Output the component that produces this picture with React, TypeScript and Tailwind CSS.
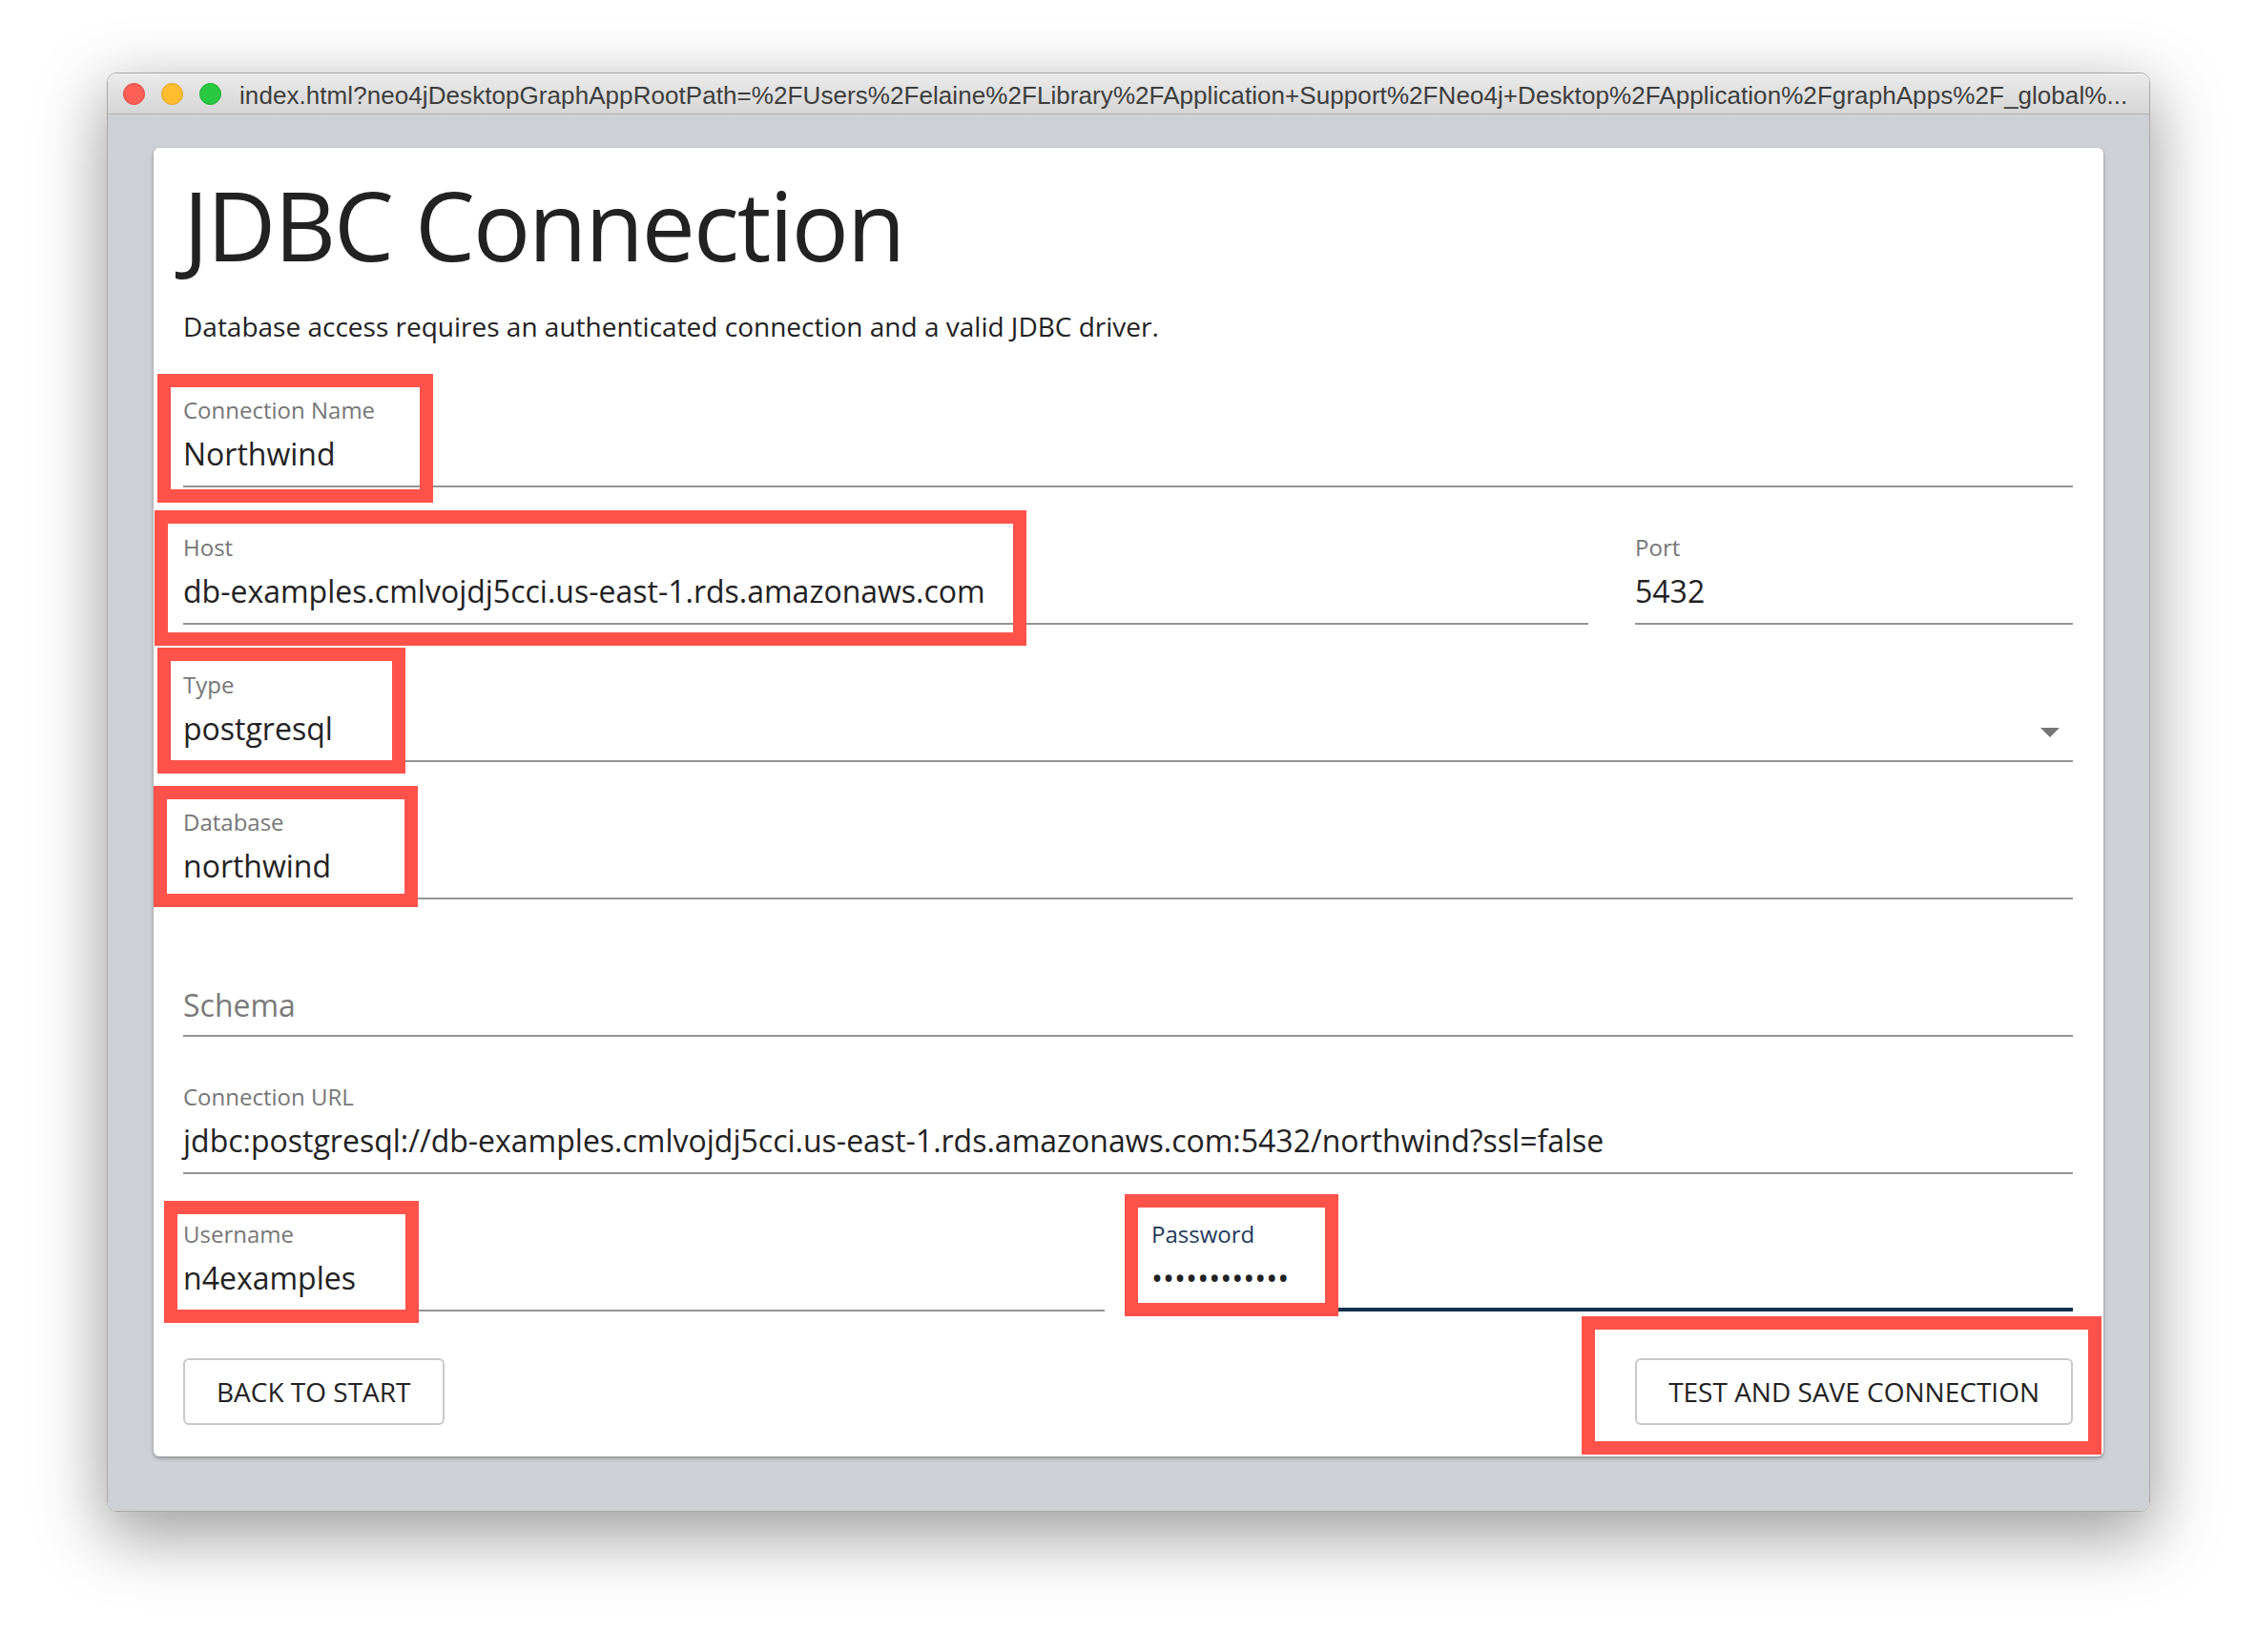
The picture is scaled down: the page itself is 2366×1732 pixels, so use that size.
import React from "react";

const annotations = [
	{ key: "name", left: 165, top: 392, width: 289, height: 135 },
	{ key: "host", left: 162, top: 535, width: 914, height: 142 },
	{ key: "type", left: 165, top: 679, width: 260, height: 132 },
	{ key: "db", left: 161, top: 824, width: 277, height: 127 },
	{ key: "user", left: 172, top: 1259, width: 267, height: 128 },
	{ key: "pass", left: 1179, top: 1252, width: 224, height: 128 },
	{ key: "save", left: 1658, top: 1380, width: 545, height: 145 },
];

const TextField = ({
	label,
	value,
	placeholder,
	focused,
	select,
}: {
	label?: string;
	value?: string;
	placeholder?: string;
	focused?: boolean;
	select?: boolean;
}) => {
	return (
		<div
			className={
				focused
					? "pt-[51px] pb-[11px] border-b-4 border-[#14314f]"
					: "pt-[51px] pb-[13px] border-b-2 border-[#949494]"
			}
		>
			<div
				className={`h-[24px] text-[24px] leading-[24px] whitespace-nowrap ${
					focused ? "text-[#1d3a5a]" : "text-[#767676]"
				}`}
			>
				{label}
			</div>
			<div className="mt-[14px] h-[40px] flex items-center">
				{placeholder ? (
					<span className="mt-[4px] text-[32px] leading-[40px] text-[#7a7a7a] whitespace-nowrap">
						{placeholder}
					</span>
				) : (
					<span className="text-[32px] leading-[40px] text-[#222222] whitespace-nowrap">
						{value}
					</span>
				)}
				{select ? (
					<svg
						width="20"
						height="10"
						viewBox="0 0 20 10"
						className="ml-auto mr-[14px] mt-[8px]"
					>
						<path d="M0 0 L20 0 L10 10 Z" fill="#757575" />
					</svg>
				) : null}
			</div>
		</div>
	);
};

const OutlineButton = ({ title }: { title: string }) => (
	<button className="h-[70px] px-[33px] rounded-[6px] border-2 border-[#c9c9c9] bg-white text-[28px] leading-[40px] text-[#222222] whitespace-nowrap">
		{title}
	</button>
);

export default function App() {
	return (
		<div className="relative w-[2366px] h-[1732px] bg-white pt-[76px] pl-[112px] overflow-hidden font-['Open_Sans',sans-serif]">
			<div className="w-[2142px] rounded-[10px] border border-[#a9a9a9] shadow-[0_22px_70px_4px_rgba(0,0,0,0.38)] overflow-hidden">
				{/* title bar */}
				<div className="h-[43px] flex items-center pl-[16px] bg-gradient-to-b from-[#ebebeb] to-[#d5d5d5] border-b border-[#b1b1b1]">
					<div className="flex gap-[17px]">
						<span className="w-[23px] h-[23px] rounded-full bg-[#fe5f57] border border-[#e0443e]" />
						<span className="w-[23px] h-[23px] rounded-full bg-[#febc2e] border border-[#dea123]" />
						<span className="w-[23px] h-[23px] rounded-full bg-[#28c840] border border-[#1aab29]" />
					</div>
					<span className="ml-[19px] mt-[3px] text-[26px] tracking-[0.07px] leading-[30px] text-[#3d3d3d] whitespace-nowrap font-['Liberation_Sans',Arial,sans-serif]">
						index.html?neo4jDesktopGraphAppRootPath=%2FUsers%2Felaine%2FLibrary%2FApplication+Support%2FNeo4j+Desktop%2FApplication%2FgraphApps%2F_global%...
					</span>
				</div>

				{/* window body */}
				<div className="bg-[#cdd0d5] px-[48px] pt-[35px] pb-[57px]">
					<div className="bg-white rounded-[6px] pt-[30px] pl-[31px] pr-[32px] pb-[33px] shadow-[0_2px_4px_rgba(0,0,0,0.25),0_1px_2px_rgba(0,0,0,0.15)]">
						<h1 className="text-[100px] leading-[100px] tracking-[-2px] text-[#222222] whitespace-nowrap">
							JDBC Connection
						</h1>
						<p className="mt-[39px] text-[28px] leading-[36px] text-[#222222] whitespace-nowrap">
							Database access requires an authenticated connection and a valid JDBC driver.
						</p>

						<div className="mt-[7px] flex flex-col">
							<TextField label="Connection Name" value="Northwind" />
							<div className="grid grid-cols-[1fr_459px] gap-x-[49px]">
								<TextField label="Host" value="db-examples.cmlvojdj5cci.us-east-1.rds.amazonaws.com" />
								<TextField label="Port" value="5432" />
							</div>
							<TextField label="Type" value="postgresql" select />
							<TextField label="Database" value="northwind" />
							<TextField placeholder="Schema" />
							<TextField
								label="Connection URL"
								value="jdbc:postgresql://db-examples.cmlvojdj5cci.us-east-1.rds.amazonaws.com:5432/northwind?ssl=false"
							/>
							<div className="grid grid-cols-2 gap-x-[49px]">
								<TextField label="Username" value="n4examples" />
								<TextField label="Password" value="••••••••••••" focused />
							</div>
						</div>

						<div className="mt-[49px] flex justify-between">
							<OutlineButton title="BACK TO START" />
							<OutlineButton title="TEST AND SAVE CONNECTION" />
						</div>
					</div>
				</div>
			</div>

			{/* red annotation boxes */}
			{annotations.map((box) => (
				<div
					key={box.key}
					className="absolute border-[14px] border-[#ff524a] pointer-events-none"
					style={{ left: box.left, top: box.top, width: box.width, height: box.height }}
				/>
			))}
		</div>
	);
}
